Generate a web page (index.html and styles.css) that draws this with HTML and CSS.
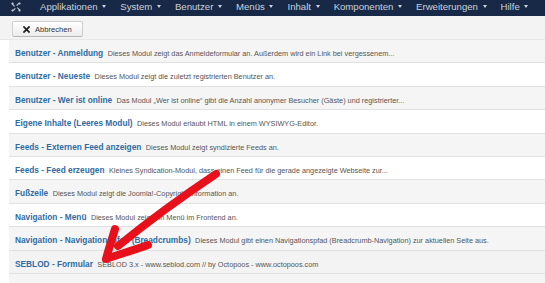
FILE: index.html
```html
<!DOCTYPE html>
<html lang="de">
<head>
    <meta charset="UTF-8">
    <title>Module auswählen</title>
    <link rel="stylesheet" href="styles.css">
</head>
<body>
    <div class="navbar">
        <div class="brand">
            <svg viewBox="0 0 20 20" width="10" height="10">
                <g fill="#c9d0dc">
                    <path d="M3 3 L8 8 L6.5 9.5 L1.5 4.5 Z"/>
                    <path d="M17 3 L12 8 L10.5 6.5 L15.5 1.5 Z"/>
                    <path d="M17 17 L12 12 L13.5 10.5 L18.5 15.5 Z"/>
                    <path d="M3 17 L8 12 L9.5 13.5 L4.5 18.5 Z"/>
                    <circle cx="3" cy="3" r="2.2"/>
                    <circle cx="17" cy="3" r="2.2"/>
                    <circle cx="17" cy="17" r="2.2"/>
                    <circle cx="3" cy="17" r="2.2"/>
                </g>
            </svg>
        </div>
        <ul class="menu">
            <li>Applikationen <span class="caret"></span></li>
            <li>System <span class="caret"></span></li>
            <li>Benutzer <span class="caret"></span></li>
            <li>Menüs <span class="caret"></span></li>
            <li>Inhalt <span class="caret"></span></li>
            <li>Komponenten <span class="caret"></span></li>
            <li>Erweiterungen <span class="caret"></span></li>
            <li>Hilfe <span class="caret"></span></li>
        </ul>
    </div>

    <div class="toolbar">
        <button class="btn">
            <svg viewBox="0 0 10 10" width="7" height="7">
                <path d="M1.5 1.5 L8.5 8.5 M8.5 1.5 L1.5 8.5" stroke="#222" stroke-width="2.6" stroke-linecap="square"/>
            </svg>
            Abbrechen
        </button>
    </div>

    <div class="content">
        <ul class="module-list">
            <li><a>Benutzer - Anmeldung</a> <small>Dieses Modul zeigt das Anmeldeformular an. Außerdem wird ein Link bei vergessenem...</small></li>
            <li><a>Benutzer - Neueste</a> <small>Dieses Modul zeigt die zuletzt registrierten Benutzer an.</small></li>
            <li><a>Benutzer - Wer ist online</a> <small>Das Modul „Wer ist online“ gibt die Anzahl anonymer Besucher (Gäste) und registrierter...</small></li>
            <li><a>Eigene Inhalte (Leeres Modul)</a> <small>Dieses Modul erlaubt HTML in einem WYSIWYG-Editor.</small></li>
            <li><a>Feeds - Externen Feed anzeigen</a> <small>Dieses Modul zeigt syndizierte Feeds an.</small></li>
            <li><a>Feeds - Feed erzeugen</a> <small>Kleines Syndication-Modul, dass einen Feed für die gerade angezeigte Webseite zur...</small></li>
            <li><a>Fußzeile</a> <small>Dieses Modul zeigt die Joomla!-Copyright-Information an.</small></li>
            <li><a>Navigation - Menü</a> <small>Dieses Modul zeigt ein Menü im Frontend an.</small></li>
            <li><a>Navigation - Navigationspfad (Breadcrumbs)</a> <small>Dieses Modul gibt einen Navigationspfad (Breadcrumb-Navigation) zur aktuellen Seite aus.</small></li>
            <li class="hover"><a>SEBLOD - Formular</a> <small>SEBLOD 3.x - www.seblod.com // by Octopoos - www.octopoos.com</small></li>
            <li><a>SEBLOD - Liste</a> <small>SEBLOD 3.x - www.seblod.com // by Octopoos - www.octopoos.com</small></li>
        </ul>

        <!-- red marker arrow drawn over the list -->
        <svg class="arrow" width="545" height="243" viewBox="0 0 545 243">
            <g fill="none" stroke="#e8101a" stroke-width="8" stroke-linecap="round" stroke-linejoin="round">
                <path d="M216 134 C186 154 150 180 118 206"/>
                <path d="M115 189 C112 199 109 208 106 219 C120 214 134 210 148 205"/>
            </g>
        </svg>
    </div>
</body>
</html>
```

FILE: styles.css
```css
* {
    margin: 0;
    padding: 0;
    box-sizing: border-box;
}

body {
    font-family: 'Liberation Sans', Arial, Helvetica, sans-serif;
    background: #ffffff;
    width: 545px;
    height: 283px;
    overflow: hidden;
}

.navbar {
    height: 16px;
    background: #172946;
    display: flex;
    align-items: center;
    padding-left: 11px;
}

.brand {
    display: flex;
    align-items: center;
    width: 29px;
    margin-top: -3px;
}

.menu {
    list-style: none;
    display: flex;
    margin-top: -4px;
}

.menu li {
    color: #ccd2dc;
    font-size: 9.6px;
    margin-right: 14px;
    white-space: nowrap;
}

.caret {
    display: inline-block;
    width: 0;
    height: 0;
    border-left: 2.5px solid transparent;
    border-right: 2.5px solid transparent;
    border-top: 3px solid #ccd2dc;
    vertical-align: middle;
    margin-left: 2px;
}

.toolbar {
    height: 24px;
    background: #f3f3f3;
    border-bottom: 1px solid #e8e8e8;
    padding: 5px 0 0 12px;
}

.btn {
    height: 16px;
    width: 71px;
    display: flex;
    align-items: center;
    gap: 5px;
    padding-left: 10px;
    font-family: 'Liberation Sans', Arial, sans-serif;
    font-size: 7.6px;
    color: #333;
    background: linear-gradient(#ffffff, #ececec);
    border: 1px solid #cfcfcf;
    border-bottom-color: #b8b8b8;
    border-radius: 2px;
}

.content {
    position: relative;
}

.module-list {
    list-style: none;
    margin-left: 9px;
}

.module-list li {
    height: 23.4px;
    line-height: 22.4px;
    border-bottom: 1px solid #e1e1e1;
    padding-left: 6px;
    white-space: nowrap;
    overflow: hidden;
}

.module-list li:nth-child(odd) {
    background: #f5f5f5;
}

.module-list li.hover {
    background: #f3f3f3;
}

.module-list a {
    color: #2f6ca3;
    font-weight: bold;
    font-size: 8.3px;
}

.module-list small {
    color: #555;
    font-size: 7.3px;
}

.arrow {
    position: absolute;
    left: 0;
    top: 0;
}
```
